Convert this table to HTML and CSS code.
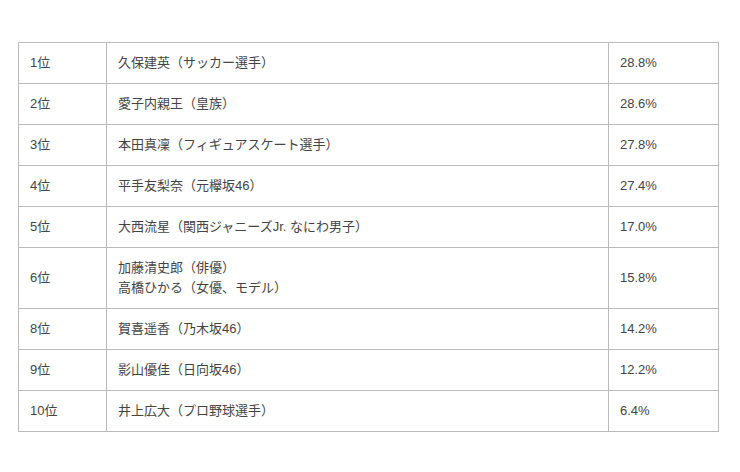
FILE: index.html
```html
<!DOCTYPE html>
<html lang="ja">
<head>
<meta charset="utf-8">
<link rel="stylesheet" href="styles.css">
</head>
<body>
<div class="wrap">
<table class="rank">
<colgroup><col class="c1"><col class="c2"><col class="c3"></colgroup>
<tr><td>1位</td><td>久保建英（サッカー選手）</td><td>28.8%</td></tr>
<tr><td>2位</td><td>愛子内親王（皇族）</td><td>28.6%</td></tr>
<tr><td>3位</td><td>本田真凜（フィギュアスケート選手）</td><td>27.8%</td></tr>
<tr><td>4位</td><td>平手友梨奈（元欅坂46）</td><td>27.4%</td></tr>
<tr><td>5位</td><td>大西流星（関西ジャニーズJr. なにわ男子）</td><td>17.0%</td></tr>
<tr><td>6位</td><td>加藤清史郎（俳優）<br>高橋ひかる（女優、モデル）</td><td>15.8%</td></tr>
<tr><td>8位</td><td>賀喜遥香（乃木坂46）</td><td>14.2%</td></tr>
<tr><td>9位</td><td>影山優佳（日向坂46）</td><td>12.2%</td></tr>
<tr><td>10位</td><td>井上広大（プロ野球選手）</td><td>6.4%</td></tr>
</table>
</div>
</body>
</html>
```
FILE: styles.css
```css
html, body {
  margin: 0;
  padding: 0;
  background: #fff;
}
.wrap {
  padding: 42px 0 0 18px;
}
.rank {
  border-collapse: collapse;
  width: 700px;
  table-layout: fixed;
  font-family: "Liberation Sans", "Noto Sans CJK JP", sans-serif;
  font-size: 13px;
  line-height: 20px;
  color: #444;
}
.c1 { width: 88px; }
.c2 { width: 502px; }
.c3 { width: 110px; }
.rank td {
  border: 1px solid #bbb;
  padding: 10px 11px;
  vertical-align: middle;
  text-align: left;
}
```
